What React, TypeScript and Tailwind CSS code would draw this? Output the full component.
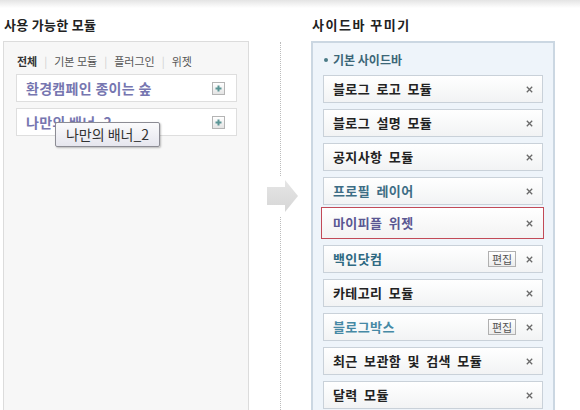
type Mod = { t: string; c?: string; edit?: boolean; sel?: boolean }

const sidebar: Mod[] = [
  { t: "블로그 로고 모듈" },
  { t: "블로그 설명 모듈" },
  { t: "공지사항 모듈" },
  { t: "프로필 레이어", c: "text-[#3d6d85]" },
  { t: "마이피플 위젯", c: "text-[#5a5792]", sel: true },
  { t: "백인닷컴", c: "text-[#2e6982]", edit: true },
  { t: "카테고리 모듈" },
  { t: "블로그박스", c: "text-[#4689a5] font-semibold", edit: true },
  { t: "최근 보관함 및 검색 모듈" },
  { t: "달력 모듈" },
]

function PlusButton() {
  return (
    <span className="flex h-[13px] w-[13px] items-center justify-center border border-[#b4b4b4] bg-gradient-to-b from-white to-[#e4e4e4]">
      <svg width="7" height="7" viewBox="0 0 7 7">
        <path d="M3.5 0.5v6M0.5 3.5h6" stroke="#5b9595" strokeWidth="2" />
      </svg>
    </span>
  )
}

function Close() {
  return (
    <svg width="7" height="7" viewBox="0 0 7 7" className="shrink-0">
      <path d="M0.8 0.8l5.4 5.4M6.2 0.8l-5.4 5.4" stroke="#6a6a6a" strokeWidth="1.3" />
    </svg>
  )
}

function SideItem({ m }: { m: Mod }) {
  const label = `flex-1 text-[13px] tracking-[0.4px] [word-spacing:3px] ${m.c ?? "text-[#222]"} ${m.c?.includes("font-") ? "" : "font-bold"}`
  if (m.sel) {
    return (
      <div className="-mt-[4px] -ml-[2px] -mr-[1px] flex h-[32px] items-center border border-[#c24a57] bg-gradient-to-b from-white to-[#f3f3f3] pl-[11px] pr-[10px]">
        <span className={label}>{m.t}</span>
        <Close />
      </div>
    )
  }
  return (
    <div className="flex h-[28px] items-center border border-[#c9d1d9] bg-gradient-to-b from-white to-[#f2f3f4] pl-[9px] pr-[9px]">
      <span className={label}>{m.t}</span>
      {m.edit && (
        <span className="mr-[10px] flex h-[16px] w-[28px] items-center justify-center border border-[#b0b0b0] bg-gradient-to-b from-white to-[#ececec] text-[11px] leading-none text-[#555]">
          편집
        </span>
      )}
      <Close />
    </div>
  )
}

export default function App() {
  return (
    <div className="relative h-[410px] w-[580px] overflow-hidden bg-white font-['Noto_Sans_CJK_KR','Liberation_Sans',sans-serif]">
      <div className="h-[8px] bg-gradient-to-b from-[#e4e4e4] to-white" />

      <div className="flex pl-[3px]">
        {/* available modules */}
        <div className="flex w-[246px] flex-col">
          <h2 className="mt-[9px] h-[16px] pl-[1px] text-[13px] font-bold leading-[16px] tracking-[0.3px] text-[#222]">사용 가능한 모듈</h2>
          <div className="mt-[8px] h-[400px] shrink-0 border border-[#dcdcdc] bg-[#f7f7f7] pl-[12px] pr-[11px] pt-[11px]">
            <div className="flex h-[16px] items-center pl-[1px] text-[11px] leading-[16px] text-[#555]">
              <span className="font-bold text-[#333]">전체</span>
              <span className="mx-[7px] text-[#d0d0d0]">|</span>
              <span>기본 모듈</span>
              <span className="mx-[7px] text-[#d0d0d0]">|</span>
              <span>플러그인</span>
              <span className="mx-[7px] text-[#d0d0d0]">|</span>
              <span>위젯</span>
            </div>
            <div className="mt-[5px] flex flex-col gap-[6px]">
              {["환경캠페인 종이는 숲", "나만의 배너_2"].map((t) => (
                <div key={t} className="flex h-[28px] items-center border border-[#dedede] bg-white pl-[9px] pr-[11px]">
                  <span className="flex-1 text-[14px] font-bold tracking-[0.3px] text-[#7676b0]">{t}</span>
                  <PlusButton />
                </div>
              ))}
            </div>
          </div>
        </div>

        {/* divider with arrow */}
        <div className="relative w-[62px]">
          <div className="ml-[31px] mt-[34px] h-[400px] border-l border-dotted border-[#bcbcbc]" />
          <div className="absolute left-[18px] top-[168px] bg-white py-[4px]">
            <svg width="31" height="32" viewBox="0 0 31 32">
              <defs>
                <linearGradient id="ag" x1="0" y1="0" x2="0" y2="1">
                  <stop offset="0" stopColor="#e6e6e6" />
                  <stop offset="1" stopColor="#d6d6d6" />
                </linearGradient>
              </defs>
              <path d="M0 7h18V0l13 16-13 16v-7H0z" fill="url(#ag)" />
            </svg>
          </div>
        </div>

        {/* sidebar */}
        <div className="flex w-[244px] flex-col">
          <h2 className="mt-[9px] h-[16px] pl-[1px] text-[13px] font-bold leading-[16px] tracking-[1.5px] text-[#222]">사이드바 꾸미기</h2>
          <div className="mt-[8px] h-[400px] shrink-0 border-2 border-[#cbd7e2] bg-[#eef4fa] px-[10px] pt-[9px]">
            <div className="flex h-[16px] items-center text-[12px] font-bold leading-[16px] text-[#3b6677]">
              <span className="ml-[1px] mr-[5px] h-[4px] w-[4px] rounded-full bg-[#4a7a86]" />
              기본 사이드바
            </div>
            <div className="mt-[7px] flex flex-col gap-[6px]">
              {sidebar.map((m) => (
                <SideItem key={m.t} m={m} />
              ))}
            </div>
          </div>
        </div>
      </div>

      {/* tooltip */}
      <div className="absolute left-[55px] top-[122px] flex h-[25px] w-[105px] items-center justify-center rounded-[2px] border border-[#8c8c94] bg-gradient-to-b from-[#fbfbfc] to-[#e6e6ee] text-[14px] text-[#333] shadow-[1px_1px_2px_rgba(0,0,0,0.25)]">
        나만의 배너_2
      </div>
    </div>
  )
}
